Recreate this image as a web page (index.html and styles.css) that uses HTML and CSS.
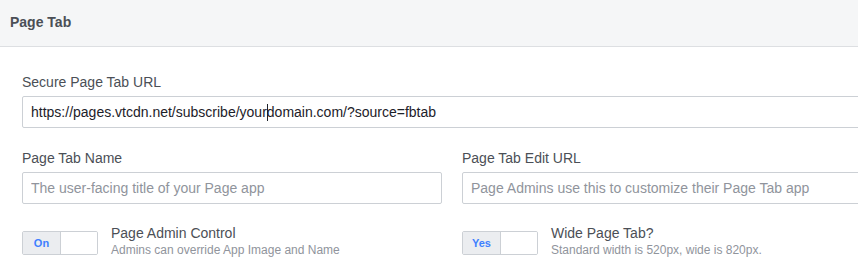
FILE: index.html
```
<!DOCTYPE html>
<html>
    <head>
        <meta name="viewport" content="width=device-width, initial-scale=1.0">
        <meta charset="utf-8">
        <title>Page Tab</title>
        <link rel="stylesheet" href="styles.css">
    </head>
    <body>
        <section class="panel">
            <header class="panel-header">Page Tab</header>
            <div class="panel-body">
                <div class="field">
                    <label class="field-label">Secure Page Tab URL</label>
                    <div class="text-input">https://pages.vtcdn.net/subscribe/your<span class="caret"></span>domain.com/?source=fbtab</div>
                </div>
                <div class="field-row">
                    <div class="field">
                        <label class="field-label">Page Tab Name</label>
                        <input class="text-input" placeholder="The user-facing title of your Page app">
                    </div>
                    <div class="field">
                        <label class="field-label">Page Tab Edit URL</label>
                        <input class="text-input" placeholder="Page Admins use this to customize their Page Tab app">
                    </div>
                </div>
                <div class="field-row">
                    <div class="switch-item">
                        <div class="switch">
                            <span class="switch-on">On</span>
                            <span class="switch-off"></span>
                        </div>
                        <div class="switch-text">
                            <div class="switch-title">Page Admin Control</div>
                            <div class="switch-help">Admins can override App Image and Name</div>
                        </div>
                    </div>
                    <div class="switch-item">
                        <div class="switch">
                            <span class="switch-on">Yes</span>
                            <span class="switch-off"></span>
                        </div>
                        <div class="switch-text">
                            <div class="switch-title">Wide Page Tab?</div>
                            <div class="switch-help">Standard width is 520px, wide is 820px.</div>
                        </div>
                    </div>
                </div>
            </div>
        </section>
    </body>
</html>
```
FILE: styles.css
```
body {
    margin: 0;
    background-color: #ffffff;
    font-family: "Liberation Sans", Arial, sans-serif;
    font-size: 14px;
    line-height: 18px;
    color: #4b4f56;
    overflow: hidden;
}

.panel {
    overflow: hidden;
}

.panel-header {
    height: 18px;
    padding: 13px 10px 15px;
    background-color: #f5f6f7;
    border-bottom: 1px solid #dddfe2;
    font-weight: bold;
    color: #4b4f56;
}

.panel-body {
    width: 860px;
    padding: 26px 22px 0;
}

.field {
    display: flex;
    flex-direction: column;
    margin-bottom: 21px;
}

.field-label {
    margin-bottom: 5px;
}

.text-input {
    box-sizing: border-box;
    height: 32px;
    padding: 0 8px;
    border: 1px solid #ccd0d5;
    border-radius: 2px;
    font-family: "Liberation Sans", Arial, sans-serif;
    font-size: 14px;
    line-height: 30px;
    color: #1d2129;
    background-color: #ffffff;
}

input.text-input {
    width: 100%;
}

input.text-input::placeholder {
    color: #90949c;
}

.caret {
    display: inline-block;
    width: 1px;
    height: 17px;
    margin-right: -1px;
    vertical-align: -4px;
    background-color: #1d2129;
}

.field-row {
    display: grid;
    grid-template-columns: 420px 420px;
    column-gap: 20px;
}

.field-row .field {
    margin-bottom: 20px;
}

.switch-item {
    display: flex;
    align-items: flex-start;
    gap: 13px;
}

.switch {
    display: flex;
    width: 76px;
    height: 24px;
    margin-top: 7px;
    box-sizing: border-box;
    border: 1px solid #ccd0d5;
    border-radius: 2px;
    overflow: hidden;
}

.switch-on {
    width: 37px;
    background-color: #ebedf0;
    border-right: 1px solid #ccd0d5;
    color: #4080ff;
    font-size: 11px;
    font-weight: bold;
    line-height: 22px;
    text-align: center;
}

.switch-off {
    flex: 1;
    background-color: #ffffff;
}

.switch-title {
    color: #4b4f56;
}

.switch-help {
    font-size: 12px;
    line-height: 16px;
    color: #90949c;
}
```
